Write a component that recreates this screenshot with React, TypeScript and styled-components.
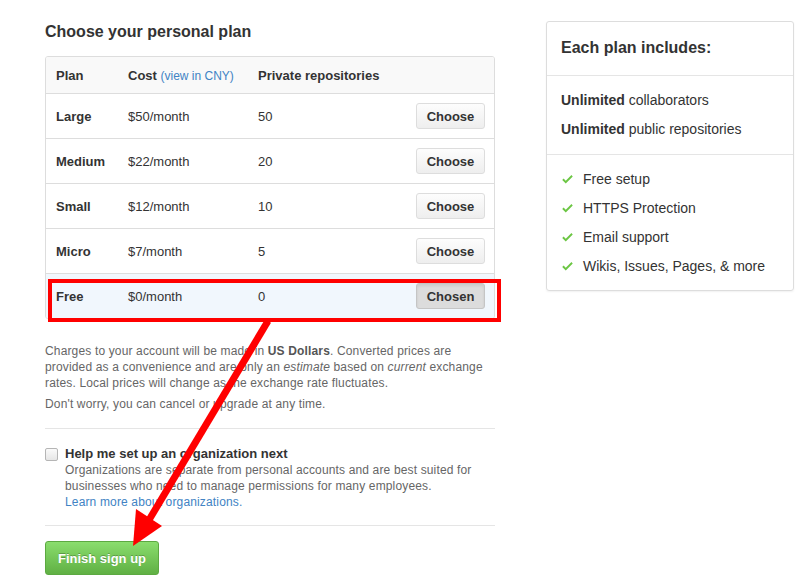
import React from 'react'
import styled, { createGlobalStyle } from 'styled-components'

const GlobalStyle = createGlobalStyle`
    body {
        margin: 0;
        background: #fff;
        font-family: 'Liberation Sans', Arial, Helvetica, sans-serif;
        color: #333;
    }
`

type Plan = { name: string; cost: string; repos: string; chosen?: boolean }

const plans: Plan[] = [
    { name: 'Large', cost: '$50/month', repos: '50' },
    { name: 'Medium', cost: '$22/month', repos: '20' },
    { name: 'Small', cost: '$12/month', repos: '10' },
    { name: 'Micro', cost: '$7/month', repos: '5' },
    { name: 'Free', cost: '$0/month', repos: '0', chosen: true },
]

const features = ['Free setup', 'HTTPS Protection', 'Email support', 'Wikis, Issues, Pages, & more']

const CheckIcon = () => (
    <svg width="11" height="14" viewBox="0 0 12 16" aria-hidden="true">
        <path fill="#6cc644" d="M12 5l-8 8-4-4 1.5-1.5L4 10l6.5-6.5L12 5z" />
    </svg>
)

const App = () => {
    return (
        <>
            <GlobalStyle />
            <StyledPage>
                <StyledMain>
                    <StyledHeading>Choose your personal plan</StyledHeading>
                    <StyledTable>
                        <StyledHeaderRow>
                            <span>Plan</span>
                            <span>
                                Cost <StyledSmallLink href="#">(view in CNY)</StyledSmallLink>
                            </span>
                            <span>Private repositories</span>
                            <span />
                        </StyledHeaderRow>
                        {plans.map((plan) => (
                            <StyledPlanRow key={plan.name} $chosen={plan.chosen}>
                                <StyledPlanName>{plan.name}</StyledPlanName>
                                <span>{plan.cost}</span>
                                <span>{plan.repos}</span>
                                <StyledMiniButton $chosen={plan.chosen}>{plan.chosen ? 'Chosen' : 'Choose'}</StyledMiniButton>
                            </StyledPlanRow>
                        ))}
                    </StyledTable>

                    <StyledNotes>
                        <StyledNote>
                            Charges to your account will be made in <strong>US Dollars</strong>. Converted prices are
                            provided as a convenience and are only an <em>estimate</em> based on <em>current</em> exchange
                            rates. Local prices will change as the exchange rate fluctuates.
                        </StyledNote>
                        <StyledNote>Don't worry, you can cancel or upgrade at any time.</StyledNote>
                    </StyledNotes>

                    <StyledDivider />

                    <StyledOrgOption>
                        <StyledCheckbox type="checkbox" />
                        <div>
                            <StyledOrgTitle>Help me set up an organization next</StyledOrgTitle>
                            <StyledOrgText>
                                Organizations are separate from personal accounts and are best suited for businesses who
                                need to manage permissions for many employees.
                                <br />
                                <StyledLink href="#">Learn more about organizations.</StyledLink>
                            </StyledOrgText>
                        </div>
                    </StyledOrgOption>

                    <StyledDivider />

                    <StyledGreenButton>Finish sign up</StyledGreenButton>
                </StyledMain>

                <StyledSidebar>
                    <StyledSidebarTitle>Each plan includes:</StyledSidebarTitle>
                    <StyledSidebarSection>
                        <StyledSidebarItem>
                            <strong>Unlimited</strong> collaborators
                        </StyledSidebarItem>
                        <StyledSidebarItem>
                            <strong>Unlimited</strong> public repositories
                        </StyledSidebarItem>
                    </StyledSidebarSection>
                    <StyledSidebarSection>
                        {features.map((f) => (
                            <StyledSidebarItem key={f} $icon>
                                <CheckIcon />
                                {f}
                            </StyledSidebarItem>
                        ))}
                    </StyledSidebarSection>
                </StyledSidebar>

                {/* red annotation drawn over the screenshot */}
                <StyledAnnotation width="807" height="587" viewBox="0 0 807 587">
                    <rect x="50" y="281" width="449" height="39" fill="none" stroke="#ff0000" strokeWidth="4" />
                    <line x1="268" y1="321" x2="146" y2="525" stroke="#ff0000" strokeWidth="7" />
                    <polygon points="133,546 136,509 162,526" fill="#ff0000" />
                </StyledAnnotation>
            </StyledPage>
        </>
    )
}
export default App

const StyledPage = styled.div`
    position: relative;
    display: flex;
    align-items: flex-start;
    gap: 51px;
    width: 807px;
    min-height: 587px;
    box-sizing: border-box;
    padding: 21px 0 0 45px;
`

const StyledMain = styled.div`
    width: 450px;
    display: flex;
    flex-direction: column;
`

const StyledHeading = styled.h2`
    margin: 0 0 13px;
    font-size: 16px;
    line-height: 22px;
    font-weight: bold;
    color: #333;
`

const StyledTable = styled.div`
    border: 1px solid #ddd;
    border-radius: 3px;
    overflow: hidden;
`

const StyledRowBase = styled.div`
    display: grid;
    grid-template-columns: 72px 130px 1fr auto;
    align-items: center;
    padding: 0 9px 0 10px;
    font-size: 13px;
    color: #333;
`

const StyledHeaderRow = styled(StyledRowBase)`
    height: 36px;
    background: #f9f9f9;
    border-bottom: 1px solid #ddd;
    font-weight: bold;
`

const StyledPlanRow = styled(StyledRowBase)<{ $chosen?: boolean }>`
    height: 44px;
    background: ${(p) => (p.$chosen ? '#f1f7fd' : '#fff')};
    border-bottom: ${(p) => (p.$chosen ? 'none' : '1px solid #ddd')};
`

const StyledPlanName = styled.span`
    font-weight: bold;
`

const StyledSmallLink = styled.a`
    font-size: 12px;
    font-weight: normal;
    color: #4183c4;
    text-decoration: none;
`

const StyledMiniButton = styled.button<{ $chosen?: boolean }>`
    width: 69px;
    height: 26px;
    padding: 0;
    font-family: inherit;
    font-size: 13px;
    font-weight: bold;
    color: #333;
    border-radius: 3px;
    border: 1px solid ${(p) => (p.$chosen ? '#c5c5c5' : '#ddd')};
    background: ${(p) => (p.$chosen ? '#dcdcdc' : 'linear-gradient(#fdfdfd, #eeeeee)')};
    box-shadow: ${(p) => (p.$chosen ? 'inset 0 2px 3px rgba(0,0,0,0.08)' : 'none')};
`

const StyledNotes = styled.div`
    max-width: 440px;
    padding: 24px 0 11px;
`

const StyledNote = styled.p`
    margin: 0 0 5px;
    font-size: 12px;
    line-height: 16px;
    letter-spacing: 0.15px;
    color: #666;

    strong {
        color: #555;
    }
`

const StyledDivider = styled.hr`
    margin: 0;
    border: 0;
    border-top: 1px solid #e5e5e5;
`

const StyledOrgOption = styled.div`
    display: flex;
    gap: 7px;
    padding: 17px 0 15px;
`

const StyledCheckbox = styled.input`
    appearance: none;
    width: 13px;
    height: 13px;
    margin: 2px 0 0;
    border: 1px solid #b5b5b5;
    border-radius: 2px;
    background: linear-gradient(#fafafa, #e6e6e6);
    flex-shrink: 0;
`

const StyledOrgTitle = styled.div`
    font-size: 13px;
    line-height: 16px;
    font-weight: bold;
    color: #333;
`

const StyledOrgText = styled.p`
    margin: 0;
    font-size: 12px;
    line-height: 16px;
    letter-spacing: 0.15px;
    color: #666;
`

const StyledLink = styled.a`
    color: #4183c4;
    text-decoration: none;
`

const StyledGreenButton = styled.button`
    align-self: flex-start;
    margin-top: 15px;
    width: 114px;
    height: 34px;
    padding: 0;
    font-family: inherit;
    font-size: 13px;
    font-weight: bold;
    color: #fff;
    text-shadow: 0 -1px 0 rgba(0, 0, 0, 0.25);
    border: 1px solid #5ca941;
    border-radius: 3px;
    background: linear-gradient(#8add6d, #60b044);
`

const StyledSidebar = styled.div`
    width: 246px;
    margin-top: 0;
    border: 1px solid #ddd;
    border-radius: 3px;
    box-shadow: 0 1px 2px rgba(0, 0, 0, 0.06);
`

const StyledSidebarTitle = styled.h3`
    margin: 0;
    padding: 15px 14px 16px;
    font-size: 16px;
    line-height: 22px;
    font-weight: bold;
    color: #333;
    border-bottom: 1px solid #e5e5e5;
`

const StyledSidebarSection = styled.ul`
    list-style: none;
    margin: 0;
    padding: 14px 14px 15px;
    display: flex;
    flex-direction: column;
    gap: 9px;

    & + & {
        border-top: 1px solid #e5e5e5;
        padding-bottom: 14px;
    }
`

const StyledSidebarItem = styled.li<{ $icon?: boolean }>`
    display: flex;
    align-items: center;
    gap: ${(p) => (p.$icon ? '10px' : '0')};
    padding-left: ${(p) => (p.$icon ? '1px' : '0')};
    font-size: 14px;
    line-height: 20px;
    color: #333;
    white-space: pre;

    strong {
        color: #333;
    }
`

const StyledAnnotation = styled.svg`
    position: absolute;
    top: 0;
    left: 0;
    pointer-events: none;
`
